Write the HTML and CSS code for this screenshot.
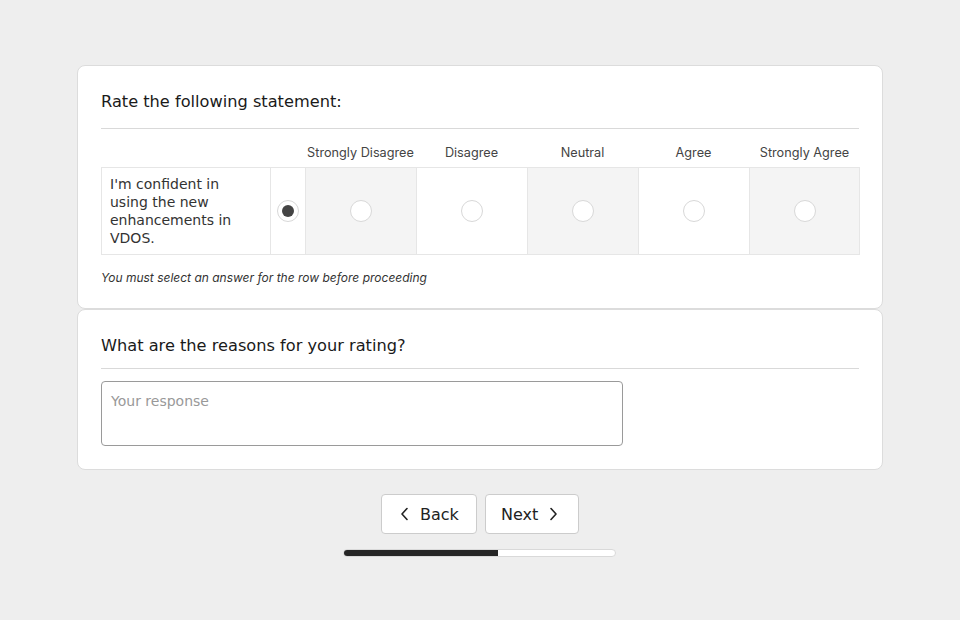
FILE: index.html
```html
<!DOCTYPE html>
<html>
<head>
<meta charset="utf-8">
<link rel="stylesheet" href="styles.css">
</head>
<body>
<div class="page">
  <section class="card card-rating">
    <h2 class="q-title">Rate the following statement:</h2>
    <div class="divider"></div>
    <div class="matrix">
      <div class="h-spacer"></div>
      <div class="h-spacer"></div>
      <div class="h-label">Strongly Disagree</div>
      <div class="h-label">Disagree</div>
      <div class="h-label">Neutral</div>
      <div class="h-label">Agree</div>
      <div class="h-label">Strongly Agree</div>
      <div class="cell cell-text">I'm confident in using the new enhancements in VDOS.</div>
      <div class="cell cell-sel"><span class="radio radio-on"></span></div>
      <div class="cell cell-opt shade"><span class="radio"></span></div>
      <div class="cell cell-opt"><span class="radio"></span></div>
      <div class="cell cell-opt shade"><span class="radio"></span></div>
      <div class="cell cell-opt"><span class="radio"></span></div>
      <div class="cell cell-opt shade last"><span class="radio"></span></div>
    </div>
    <p class="note">You must select an answer for the row before proceeding</p>
  </section>
  <section class="card card-reason">
    <h2 class="q-title">What are the reasons for your rating?</h2>
    <div class="divider"></div>
    <div class="response">Your response</div>
  </section>
  <div class="nav">
    <button class="btn btn-back"><svg width="10" height="14" viewBox="0 0 10 14"><path d="M7 1.5 L2 7 L7 12.5" fill="none" stroke="#222" stroke-width="1.6" stroke-linecap="round" stroke-linejoin="round"/></svg><span>Back</span></button>
    <button class="btn btn-next"><span>Next</span><svg width="10" height="14" viewBox="0 0 10 14"><path d="M3 1.5 L8 7 L3 12.5" fill="none" stroke="#222" stroke-width="1.6" stroke-linecap="round" stroke-linejoin="round"/></svg></button>
  </div>
  <div class="progress"><div class="progress-fill" style="width:57%"></div></div>
</div>
</body>
</html>
```
FILE: styles.css
```css
* { box-sizing: border-box; }
body {
  margin: 0;
  background: #eeeeee;
  font-family: "DejaVu Sans", sans-serif;
  color: #222;
}
.page {
  width: 806px;
  margin: 65px auto 0;
}
.card {
  background: #fff;
  border: 1px solid #dcdcdc;
  border-radius: 8px;
  padding: 0 23px;
}
.card-rating {
  padding-top: 25px;
  padding-bottom: 22px;
}
.card-reason {
  padding-top: 25px;
  padding-bottom: 23px;
}
.q-title {
  margin: 0;
  font-size: 16.2px;
  font-weight: normal;
  line-height: 22px;
  color: #1a1a1a;
}
.divider {
  height: 1px;
  background: #d9d9d9;
  margin-top: 11px;
}
.card-rating .divider { margin-top: 15px; }
.matrix {
  display: grid;
  grid-template-columns: 169px 35px repeat(5, 111px);
  width: 760px;
  margin-top: 14px;
}
.h-label {
  font-family: Inter, sans-serif;
  font-size: 12.7px;
  color: #444;
  text-align: center;
  line-height: 16px;
  padding-top: 2px;
  padding-bottom: 6px;
}
.cell {
  border-top: 1px solid #e6e6e6;
  border-bottom: 1px solid #e6e6e6;
  border-left: 1px solid #e6e6e6;
  height: 88px;
  display: flex;
  align-items: center;
  justify-content: center;
}
.cell.last { border-right: 1px solid #e6e6e6; }
.cell-text {
  justify-content: flex-start;
  padding: 0 14px 0 8px;
  font-size: 14px;
  line-height: 18px;
  color: #333;
}
.shade { background: #f4f4f4; }
.radio {
  width: 22px;
  height: 22px;
  border-radius: 50%;
  border: 1px solid #d8d8d8;
  background: #fff;
  display: flex;
  align-items: center;
  justify-content: center;
}
.radio-on::after {
  content: "";
  width: 12px;
  height: 12px;
  border-radius: 50%;
  background: #444;
}
.note {
  margin: 15px 0 0;
  font-family: Inter, sans-serif;
  font-style: italic;
  font-size: 12px;
  line-height: 16px;
  color: #333;
}
.response {
  width: 522px;
  height: 65px;
  margin-top: 12px;
  border: 1px solid #9a9a9a;
  border-radius: 4px;
  padding: 10px 9px;
  font-size: 14px;
  line-height: 18px;
  color: #999;
}
.nav {
  display: flex;
  justify-content: center;
  gap: 8px;
  margin-top: 24px;
}
.btn {
  height: 40px;
  background: #fff;
  border: 1px solid #cccccc;
  border-radius: 4px;
  font-family: "DejaVu Sans", sans-serif;
  font-size: 16px;
  color: #222;
  display: flex;
  align-items: center;
  gap: 10px;
  padding: 0;
}
.btn-back { width: 96px; padding-left: 18px; }
.btn-next { width: 94px; padding-left: 15px; }
.progress {
  width: 273px;
  height: 8px;
  margin: 15px auto 0;
  position: relative;
  left: -1px;
  background: #fff;
  border: 1px solid #d9d9d9;
  border-radius: 4px;
  overflow: hidden;
}
.progress-fill {
  height: 100%;
  background: #262626;
}
```
